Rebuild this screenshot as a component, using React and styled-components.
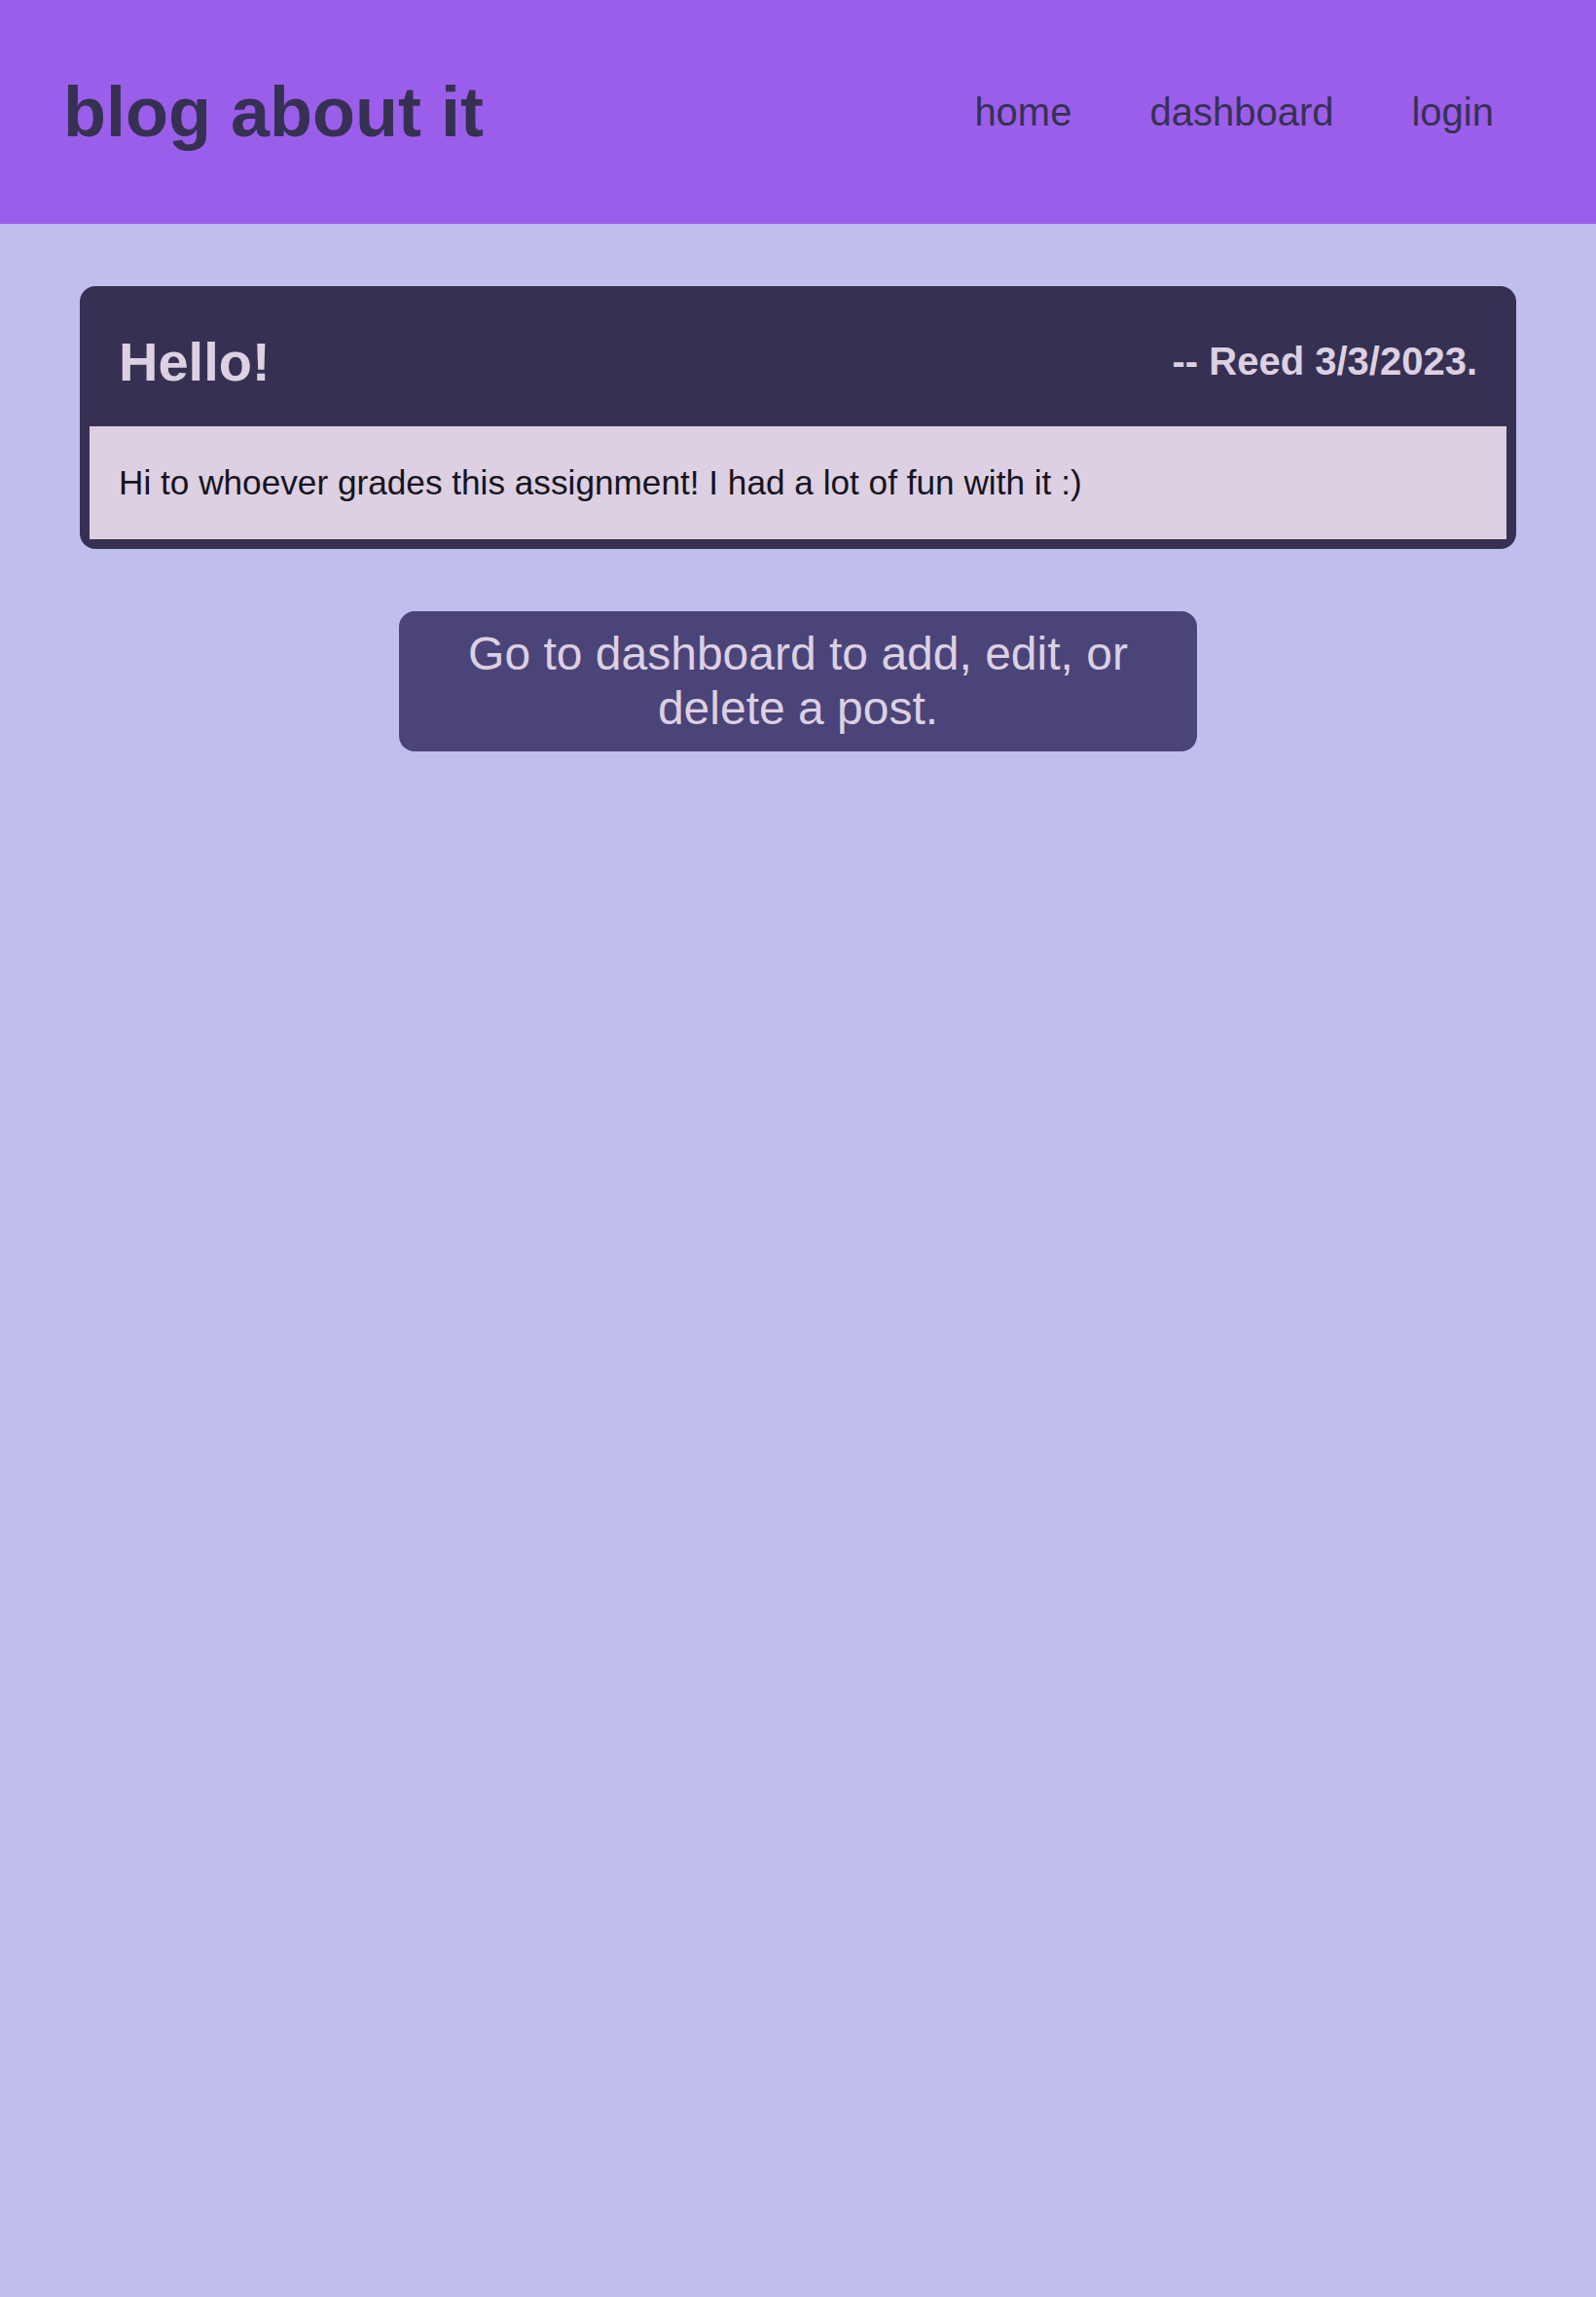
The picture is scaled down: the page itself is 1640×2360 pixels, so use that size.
import React from "react";
import styled, { createGlobalStyle } from "styled-components";

const GlobalStyle = createGlobalStyle`
  html, body {
    margin: 0;
    padding: 0;
    background: #c0beec;
    font-family: "Liberation Sans", Arial, sans-serif;
  }
  * { box-sizing: border-box; }
`;

const Page = styled.div`
  min-height: 2360px;
  background: #c0beec;
`;

const Header = styled.header`
  height: 230px;
  padding: 0 65px;
  background: #9b5eeb;
  display: flex;
  align-items: center;
  justify-content: space-between;
`;

const Brand = styled.h1`
  margin: 0;
  font-size: 72px;
  font-weight: 700;
  color: #363152;
`;

const Nav = styled.nav`
  display: flex;
  align-items: center;
`;

const NavLink = styled.a`
  padding: 0 40px;
  font-size: 40px;
  color: #363152;
  text-decoration: none;
`;

const Main = styled.main`
  padding-top: 64px;
  display: flex;
  flex-direction: column;
  align-items: center;
  gap: 64px;
`;

const Card = styled.article`
  width: 90%;
  background: #363152;
  border-radius: 16px;
  padding: 10px;
`;

const CardHeader = styled.div`
  height: 134px;
  padding: 0 30px;
  display: flex;
  align-items: center;
  justify-content: space-between;
`;

const PostTitle = styled.h2`
  margin: 0;
  font-size: 56px;
  font-weight: 700;
  color: #dcd0e2;
`;

const Byline = styled.span`
  font-size: 40px;
  font-weight: 700;
  color: #dcd0e2;
`;

const CardBody = styled.p`
  margin: 0;
  background: #dcd0e2;
  padding: 38px 30px;
  font-size: 35.2px;
  line-height: 40px;
  color: #161420;
`;

const DashboardNote = styled.div`
  width: 50%;
  padding: 16px;
  background: #4b4478;
  border-radius: 16px;
  text-align: center;
  font-size: 48px;
  line-height: 56px;
  color: #dcd0e2;
`;

export default function App() {
  return (
    <Page>
      <GlobalStyle />
      <Header>
        <Brand>blog about it</Brand>
        <Nav>
          <NavLink href="#">home</NavLink>
          <NavLink href="#">dashboard</NavLink>
          <NavLink href="#">login</NavLink>
        </Nav>
      </Header>
      <Main>
        <Card>
          <CardHeader>
            <PostTitle>Hello!</PostTitle>
            <Byline>-- Reed 3/3/2023.</Byline>
          </CardHeader>
          <CardBody>Hi to whoever grades this assignment! I had a lot of fun with it :)</CardBody>
        </Card>
        <DashboardNote>Go to dashboard to add, edit, or delete a post.</DashboardNote>
      </Main>
    </Page>
  );
}
